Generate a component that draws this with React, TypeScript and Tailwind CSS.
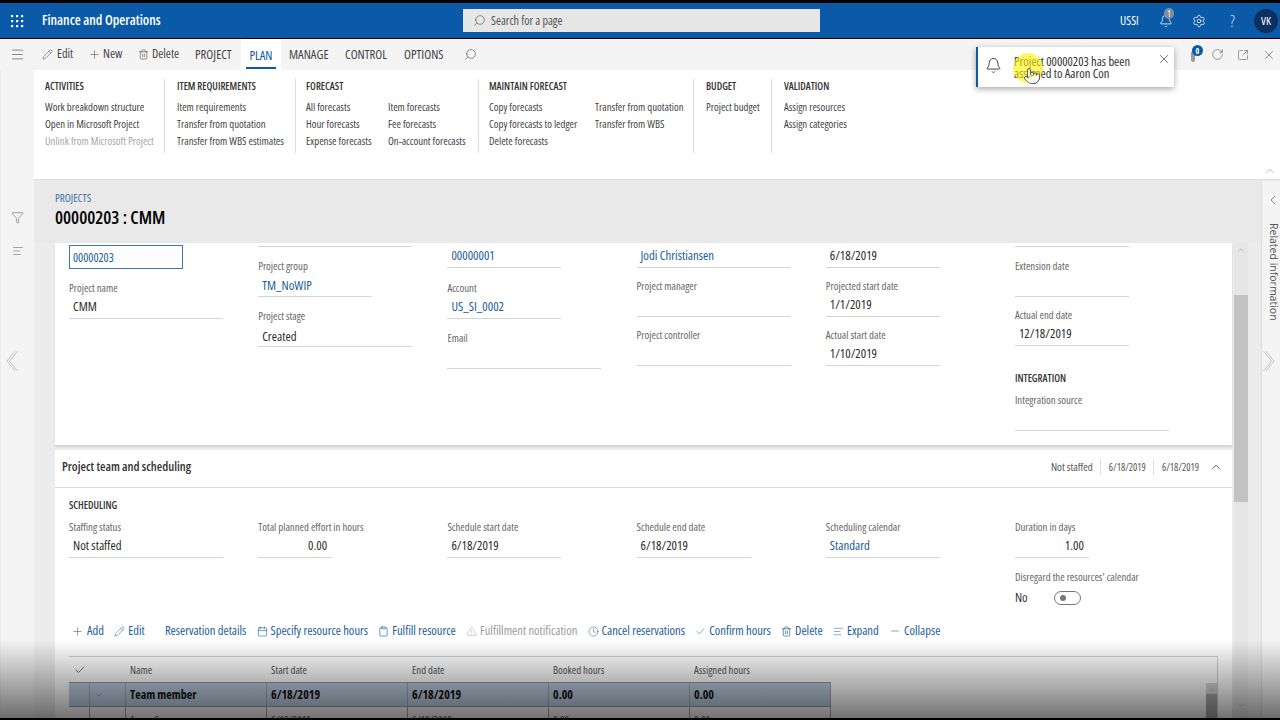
import {
  AlignLeft,
  Bell,
  Calendar,
  Check,
  ChevronDown,
  ChevronLeft,
  ChevronUp,
  Clipboard,
  Funnel,
  Menu,
  Minus,
  Pencil,
  Plus,
  Pointer,
  RotateCw,
  Search,
  Settings,
  SquareArrowOutUpRight,
  Trash2,
  TriangleAlert,
  X,
  Clock,
} from "lucide-react";
import { ReactNode } from "react";

function Waffle() {
  const dots = [2, 7, 12];
  return (
    <svg width="14" height="14" viewBox="0 0 14 14" fill="#fff">
      {dots.map((y) =>
        dots.map((x) => <rect key={`${x}-${y}`} x={x - 1} y={y - 1} width="2.2" height="2.2" />)
      )}
    </svg>
  );
}

function DoubleChevron({ flip }: { flip?: boolean }) {
  return (
    <svg width="12" height="22" viewBox="0 0 12 22" fill="none" stroke="#c4c4c4" strokeWidth="1" className={flip ? "-scale-x-100" : ""}>
      <path d="M9 1 1 11l8 10" />
      <path d="M11.5 1 3.5 11l8 10" />
    </svg>
  );
}

function RibbonItem({ children, disabled }: { children: string; disabled?: boolean }) {
  return (
    <p className={`h-[17px] leading-[17px] text-[10.75px] whitespace-nowrap ${disabled ? "text-[#a6a6a6]" : "text-[#444]"}`}>
      {children}
    </p>
  );
}

function RibbonGroup({
  title,
  width,
  last,
  columns,
}: {
  title: string;
  width: string;
  last?: boolean;
  columns: { items: string[]; width?: string; disabledLast?: boolean }[];
}) {
  return (
    <div className={`${width} h-[74px] shrink-0 ${last ? "" : "border-r border-[#dcdcdc]"}`}>
      <p className="h-[14px] leading-[14px] text-[10.25px] font-semibold text-[#333] whitespace-nowrap">{title}</p>
      <div className="flex mt-[6px]">
        {columns.map((col) => (
          <div key={col.items[0]} className={col.width}>
            {col.items.map((item, i) => (
              <RibbonItem key={item} disabled={col.disabledLast && i === col.items.length - 1}>
                {item}
              </RibbonItem>
            ))}
          </div>
        ))}
      </div>
    </div>
  );
}

function Field({
  label,
  value,
  link,
  width = "w-[154px]",
  right,
  className = "",
}: {
  label?: string;
  value?: string;
  link?: boolean;
  width?: string;
  right?: boolean;
  className?: string;
}) {
  return (
    <div className={className}>
      {label && <p className="h-[16px] leading-[16px] text-[10.75px] text-[#666] whitespace-nowrap">{label}</p>}
      <div
        className={`${width} h-[23px] border-b border-[#d4d4d4] px-[4px] leading-[20px] text-[12.75px] whitespace-nowrap ${
          link ? "text-[#1c5d9c]" : "text-[#2b2b2b]"
        } ${right ? "text-right pr-[5px]" : ""}`}
      >
        {value}
      </div>
    </div>
  );
}

function Action({ icon, label, disabled }: { icon?: ReactNode; label: string; disabled?: boolean }) {
  return (
    <div className={`flex items-center gap-[3px] whitespace-nowrap ${disabled ? "text-[#9a9a9a]" : "text-[#1c5d9c]"}`}>
      {icon}
      <span>{label}</span>
    </div>
  );
}

const cols = ["w-[21px]", "w-[36px]", "w-[141px]", "w-[141px]", "w-[141px]", "w-[141px]", "w-[141px]"];

function GridRow({ cells, className, bold }: { cells: ReactNode[]; className: string; bold?: boolean }) {
  return (
    <div className={`flex w-[762px] ${className}`}>
      {cells.map((cell, i) => (
        <div
          key={i}
          className={`${cols[i]} shrink-0 border-r border-[#9aa7b5] flex items-center px-[4px] whitespace-nowrap ${
            bold ? "text-[12px] font-bold text-[#111]" : "text-[10.75px] text-[#555]"
          }`}
        >
          {cell}
        </div>
      ))}
    </div>
  );
}

export default function App() {
  return (
    <div className="relative w-[1280px] h-[720px] overflow-hidden bg-black flex flex-col font-['Open_Sans',sans-serif] [font-stretch:75%]">
      {/* top bar */}
      <div className="mt-[3px] h-[35px] shrink-0 bg-[#0b5aa8] flex items-center text-white">
        <div className="w-[34px] flex justify-center">
          <Waffle />
        </div>
        <p className="ml-[8px] w-[421px] text-[13.75px] font-semibold">Finance and Operations</p>
        <div className="w-[357px] h-[23px] bg-[#e7e7e7] flex items-center pl-[10px] gap-[5px] text-[#555] text-[12px]">
          <Search size={13} strokeWidth={1.2} className="-scale-x-100" />
          <span>Search for a page</span>
        </div>
        <span className="ml-[300px] w-[20px] text-[12px]">USSI</span>
        <div className="relative ml-[19px]">
          <Bell size={14} strokeWidth={1.3} />
          <span className="absolute -top-[6px] left-[5px] w-[10px] h-[11px] rounded-full bg-[#7f8d9c] text-[8px] leading-[11px] text-center">1</span>
        </div>
        <Settings size={14} strokeWidth={1.3} className="ml-[19px]" />
        <span className="ml-[24px] text-[17px] leading-none w-[14px] font-light text-[#cfe0f0]">?</span>
        <div className="ml-[10px] w-[24px] h-[24px] rounded-full bg-[#0b2f5e] text-[11.5px] leading-[24px] text-center">VK</div>
      </div>

      {/* action pane */}
      <div className="mt-px h-[31px] shrink-0 bg-[#f4f4f4] flex items-center text-[12.25px] text-[#444]">
        <div className="w-[34px] flex justify-center">
          <Menu size={15} strokeWidth={1} />
        </div>
        <div className="ml-[8px] flex items-center gap-[2px] w-[46px]">
          <Pencil size={11} strokeWidth={1.1} />
          <span className="ml-[2px]">Edit</span>
        </div>
        <div className="flex items-center gap-[2px] w-[50px]">
          <Plus size={13} strokeWidth={1} />
          <span>New</span>
        </div>
        <div className="flex items-center gap-[3px] w-[57px]">
          <Trash2 size={11} strokeWidth={1.2} />
          <span>Delete</span>
        </div>
        <span className="w-[51px] text-[12.75px]">PROJECT</span>
        <div className="relative w-[40px] h-[31px] bg-white -ml-[5px] mr-[8px] text-center leading-[33px] text-[12.75px] text-[#0b5aa8]">
          PLAN
          <div className="absolute left-[5px] right-[5px] bottom-[1px] h-[2px] bg-[#0b5aa8]" />
        </div>
        <span className="w-[56px] text-[12.75px]">MANAGE</span>
        <span className="w-[59px] text-[12.75px]">CONTROL</span>
        <span className="w-[58px] text-[12.75px]">OPTIONS</span>
        <Search size={13} strokeWidth={1.1} className="ml-[2px] -scale-x-100" />
        <div className="ml-auto flex items-center gap-[13px] pr-[4px]">
          <div className="relative w-[12px] h-[14px]">
            <div className="absolute left-[6px] top-[3px] w-[4px] h-[11px] rounded-sm bg-[#9a9a9a]" />
            <span className="absolute -top-[3px] left-[7px] w-[11px] h-[11px] rounded-full bg-[#0b5aa8] text-white text-[8px] leading-[11px] text-center font-bold">0</span>
          </div>
          <RotateCw size={13} strokeWidth={1} className="ml-[1px]" />
          <SquareArrowOutUpRight size={12} strokeWidth={1} />
          <X size={14} strokeWidth={1} />
        </div>
      </div>

      <div className="flex-1 flex min-h-0 bg-[#ececec]">
        {/* left rail */}
        <div className="w-[33px] ml-px shrink-0 bg-[#f4f4f4] flex flex-col items-center text-[#555]">
          <div className="h-[109px]" />
          <div className="h-[38px] mt-[7px] flex items-end">
            <Funnel size={13} strokeWidth={1} />
          </div>
          <AlignLeft size={12} strokeWidth={1} className="mt-[21px]" />
        </div>

        <div className="flex-1 flex flex-col min-w-0">
          {/* ribbon */}
          <div className="relative h-[110px] shrink-0 bg-white border-b border-[#dedede] pl-[11px] pt-[9px] flex">
            <RibbonGroup
              title="ACTIVITIES"
              width="w-[120px]"
              columns={[{ items: ["Work breakdown structure", "Open in Microsoft Project", "Unlink from Microsoft Project"], disabledLast: true }]}
            />
            <div className="w-[12px]" />
            <RibbonGroup
              title="ITEM REQUIREMENTS"
              width="w-[119px]"
              columns={[{ items: ["Item requirements", "Transfer from quotation", "Transfer from WBS estimates"] }]}
            />
            <div className="w-[10px]" />
            <RibbonGroup
              title="FORECAST"
              width="w-[173px]"
              columns={[
                { items: ["All forecasts", "Hour forecasts", "Expense forecasts"], width: "w-[82px]" },
                { items: ["Item forecasts", "Fee forecasts", "On-account forecasts"] },
              ]}
            />
            <div className="w-[10px]" />
            <RibbonGroup
              title="MAINTAIN FORECAST"
              width="w-[205px]"
              columns={[
                { items: ["Copy forecasts", "Copy forecasts to ledger", "Delete forecasts"], width: "w-[106px]" },
                { items: ["Transfer from quotation", "Transfer from WBS"] },
              ]}
            />
            <div className="w-[12px]" />
            <RibbonGroup title="BUDGET" width="w-[66px]" columns={[{ items: ["Project budget"] }]} />
            <div className="w-[12px]" />
            <RibbonGroup title="VALIDATION" width="w-[100px]" last columns={[{ items: ["Assign resources", "Assign categories"] }]} />
            <ChevronUp size={14} strokeWidth={1} className="absolute right-[3px] bottom-[1px] text-[#888]" />
          </div>

          {/* title */}
          <div className="h-[63px] shrink-0 pl-[21px] bg-[#e9e9e9]">
            <p className="mt-[12px] h-[12px] leading-[12px] text-[11px] text-[#3d6ea3]">PROJECTS</p>
            <p className="mt-[3px] text-[18px] leading-[20px] font-semibold text-black">00000203 : CMM</p>
          </div>

          <div className="flex-1 min-h-0 flex">
            <div className="w-[21px] shrink-0" />
            {/* cards */}
            <div className="w-[1177px] shrink-0 flex flex-col">
              <div className="h-[202px] shrink-0 bg-white overflow-hidden px-[14px] grid grid-cols-[repeat(6,189.2px)] shadow-[0_2px_2px_#d0d0d0]">
                <div className="pt-[2px]">
                  <div className="w-[114px] h-[24px] border border-[#3d76b2] px-[3px] leading-[23px] text-[12px] text-[#1c5d9c]">00000203</div>
                  <Field label="Project name" value="CMM" className="mt-[11px]" />
                </div>
                <div className="-mt-[19px]">
                  <Field value="" />
                  <Field label="Project group" value="TM_NoWIP" link width="w-[114px]" className="mt-[11px] [&>div]:leading-[22px]" />
                  <Field label="Project stage" value="Created" className="mt-[11px] [&>div]:leading-[24px]" />
                </div>
                <div className="mt-[2px]">
                  <Field value="00000001" link width="w-[114px]" />
                  <Field label="Account" value="US_SI_0002" link width="w-[114px]" className="mt-[12px]" />
                  <Field label="Email" className="mt-[11px]" />
                </div>
                <div className="mt-[2px]">
                  <Field value="Jodi Christiansen" link />
                  <Field label="Project manager" className="mt-[10px]" />
                  <Field label="Project controller" className="mt-[10px]" />
                </div>
                <div className="mt-[2px]">
                  <Field value="6/18/2019" width="w-[114px]" />
                  <Field label="Projected start date" value="1/1/2019" width="w-[114px]" className="mt-[10px]" />
                  <Field label="Actual start date" value="1/10/2019" width="w-[114px]" className="mt-[10px]" />
                </div>
                <div className="-mt-[19px]">
                  <Field width="w-[114px]" />
                  <Field label="Extension date" width="w-[114px]" className="mt-[11px]" />
                  <Field label="Actual end date" value="12/18/2019" width="w-[114px]" className="mt-[10px]" />
                  <p className="mt-[25px] h-[14px] leading-[14px] text-[10.25px] font-semibold text-[#333]">INTEGRATION</p>
                  <Field label="Integration source" className="mt-[7px]" />
                </div>
              </div>

              <div className="mt-[5px] flex-1 min-h-0 bg-white overflow-hidden">
                <div className="h-[38px] border-b border-[#dcdcdc] flex items-center pl-[7px] pr-[9px] pb-[3px]">
                  <p className="text-[12.5px] font-semibold text-[#333]">Project team and scheduling</p>
                  <div className="ml-auto flex items-center text-[10px] text-[#555]">
                    <span className="pr-[7px] border-r border-[#ddd] text-[11px]">Not staffed</span>
                    <span className="pl-[8px] pr-[7px] border-r border-[#ddd]">6/18/2019</span>
                    <span className="pl-[8px]">6/18/2019</span>
                    <ChevronUp size={14} strokeWidth={1.6} className="ml-[10px]" />
                  </div>
                </div>
                <div className="px-[14px]">
                  <p className="mt-[10px] h-[14px] leading-[14px] text-[10.25px] font-semibold text-[#333]">SCHEDULING</p>
                  <div className="mt-[7px] grid grid-cols-[repeat(6,189.2px)]">
                    <Field label="Staffing status" value="Not staffed" />
                    <Field label="Total planned effort in hours" value="0.00" right width="w-[74px]" />
                    <Field label="Schedule start date" value="6/18/2019" width="w-[114px]" />
                    <Field label="Schedule end date" value="6/18/2019" width="w-[114px]" />
                    <Field label="Scheduling calendar" value="Standard" link width="w-[114px]" />
                    <div>
                      <Field label="Duration in days" value="1.00" right width="w-[74px]" />
                      <p className="mt-[11px] h-[16px] leading-[16px] text-[10.75px] text-[#666] whitespace-nowrap">Disregard the resources' calendar</p>
                      <div className="mt-[3px] flex items-center text-[12.75px] text-[#333]">
                        <span className="w-[39px]">No</span>
                        <div className="w-[27px] h-[14px] rounded-full border border-[#777] flex items-center pl-[5px]">
                          <div className="w-[6px] h-[6px] rounded-full bg-[#777]" />
                        </div>
                      </div>
                    </div>
                  </div>
                  <div className="mt-[16px] ml-[2px] h-[16px] flex items-center gap-[10.25px] text-[12.5px]">
                    <Action icon={<Plus size={13} strokeWidth={1} />} label="Add" />
                    <Action icon={<Pencil size={11} strokeWidth={1.1} />} label="Edit" />
                    <div className="ml-[10px]">
                      <Action label="Reservation details" />
                    </div>
                    <Action icon={<Calendar size={11} strokeWidth={1.3} />} label="Specify resource hours" />
                    <Action icon={<Clipboard size={11} strokeWidth={1.4} />} label="Fulfill resource" />
                    <Action icon={<TriangleAlert size={11} strokeWidth={1} />} label="Fulfillment notification" disabled />
                    <Action icon={<Clock size={11} strokeWidth={1.1} />} label="Cancel reservations" />
                    <Action icon={<Check size={11} strokeWidth={1.1} />} label="Confirm hours" />
                    <Action icon={<Trash2 size={11} strokeWidth={1.4} />} label="Delete" />
                    <Action icon={<AlignLeft size={11} strokeWidth={1.1} />} label="Expand" />
                    <Action icon={<Minus size={12} strokeWidth={1.1} />} label="Collapse" />
                  </div>
                  <div className="relative mt-[17px] w-[1149px] border-t border-r border-[#cfcfcf]">
                    <div className="flex h-[25px] items-center text-[10.75px] text-[#555]">
                      <div className="w-[21px] flex justify-center">
                        <Check size={12} strokeWidth={1.6} />
                      </div>
                      <span className="ml-[40px] w-[141px]">Name</span>
                      <span className="w-[141px]">Start date</span>
                      <span className="w-[141px]">End date</span>
                      <span className="w-[141px]">Booked hours</span>
                      <span>Assigned hours</span>
                    </div>
                    <GridRow
                      bold
                      className="h-[25px] bg-[#bccde0] border-t border-b border-[#8f9daf]"
                      cells={["", <ChevronDown size={10} strokeWidth={1.2} className="text-[#4d6a8a]" />, "Team member", "6/18/2019", "6/18/2019", "0.00", "0.00"]}
                    />
                    <GridRow className="h-[25px]" cells={["", "", "Aaron Con", "6/18/2019", "6/18/2019", "0.00", "0.00"]} />
                    <div className="absolute right-0 top-[26px] w-[11px] h-[60px] bg-[#d8d8d8] flex flex-col items-center">
                      <ChevronUp size={9} strokeWidth={1} className="mt-[2px] text-[#888]" />
                      <div className="w-full flex-1 bg-[#a8a8a8]" />
                    </div>
                  </div>
                </div>
              </div>
            </div>

            {/* scrollbar */}
            <div className="w-[14px] ml-[2px] shrink-0 bg-[#e6e6e6] flex flex-col items-center">
              <ChevronUp size={10} strokeWidth={1} className="mt-[2px] text-[#888]" />
              <div className="mt-[40px] w-full h-[207px] bg-[#c2c2c2]" />
              <ChevronDown size={10} strokeWidth={1} className="mt-auto mb-[8px] text-[#888]" />
            </div>
            <div className="w-[13px] shrink-0" />
            {/* related information */}
            <div className="flex-1 -mt-[62px] bg-[#f4f4f4] border-l border-[#dcdcdc] flex flex-col items-center text-[#555]">
              <ChevronLeft size={16} strokeWidth={1} className="mt-[11px] ml-[3px]" />
              <span className="mt-[15px] ml-[3px] text-[10.5px] [font-stretch:100%] [writing-mode:vertical-rl] whitespace-nowrap">Related information</span>
            </div>
          </div>
        </div>
      </div>

      <div className="h-[2px] shrink-0 bg-black" />

      {/* pager chevrons */}
      <div className="absolute left-[6px] top-[350px]">
        <DoubleChevron />
      </div>
      <div className="absolute left-[1263px] top-[350px]">
        <DoubleChevron flip />
      </div>

      {/* video fade along the bottom */}
      <div className="absolute left-0 right-0 top-[640px] h-[78px] bg-gradient-to-b from-transparent to-black/55 pointer-events-none" />

      {/* notification toast */}
      <div className="absolute left-[976px] top-[47px] w-[198px] h-[40px] bg-white border-l-[2px] border-[#0b5aa8] shadow-[0_2px_6px_rgba(0,0,0,0.35)] flex text-[#333]">
        <Bell size={17} strokeWidth={1.2} className="ml-[7px] mt-[10px] shrink-0 text-[#222]" />
        <p className="ml-[12px] mt-[9px] w-[135px] text-[12.5px] leading-[12px]">Project 00000203 has been assigned to Aaron Con</p>
        <X size={14} strokeWidth={1.2} className="ml-[8px] mt-[5px] shrink-0" />
      </div>
      <div className="absolute left-[1013px] top-[53px] w-[30px] h-[30px] rounded-full bg-[#fff200]/60 pointer-events-none" />
      <Pointer size={18} strokeWidth={1} className="absolute left-[1023px] top-[67px] fill-white text-[#333]" />
    </div>
  );
}
